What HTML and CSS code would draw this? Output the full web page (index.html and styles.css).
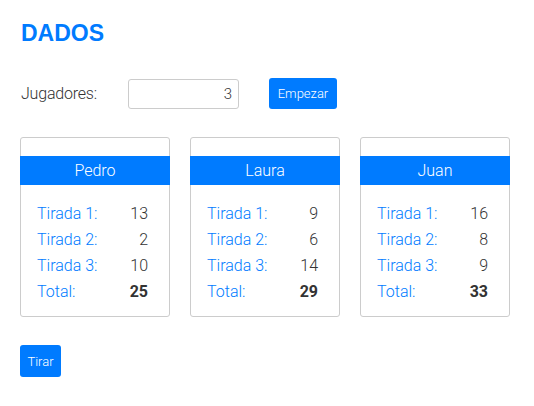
FILE: index.html
```html
<!DOCTYPE html>
<html lang="es">
<head>
<meta charset="utf-8">
<title>Dados</title>
<link rel="stylesheet" href="styles.css">
</head>
<body>
<div class="app">
  <h1 class="title">DADOS</h1>
  <div class="controls">
    <label class="controls-label" for="players">Jugadores:</label>
    <input class="controls-input" id="players" type="text" value="3">
    <button class="btn btn-start">Empezar</button>
  </div>
  <div class="cards">
    <div class="card">
      <div class="card-head">Pedro</div>
      <div class="rows">
        <span class="lbl">Tirada 1:</span><span class="val">13</span>
        <span class="lbl">Tirada 2:</span><span class="val">2</span>
        <span class="lbl">Tirada 3:</span><span class="val">10</span>
        <span class="lbl">Total:</span><span class="val total">25</span>
      </div>
    </div>
    <div class="card">
      <div class="card-head">Laura</div>
      <div class="rows">
        <span class="lbl">Tirada 1:</span><span class="val">9</span>
        <span class="lbl">Tirada 2:</span><span class="val">6</span>
        <span class="lbl">Tirada 3:</span><span class="val">14</span>
        <span class="lbl">Total:</span><span class="val total">29</span>
      </div>
    </div>
    <div class="card">
      <div class="card-head">Juan</div>
      <div class="rows">
        <span class="lbl">Tirada 1:</span><span class="val">16</span>
        <span class="lbl">Tirada 2:</span><span class="val">8</span>
        <span class="lbl">Tirada 3:</span><span class="val">9</span>
        <span class="lbl">Total:</span><span class="val total">33</span>
      </div>
    </div>
  </div>
  <button class="btn btn-roll">Tirar</button>
</div>
</body>
</html>
```
FILE: styles.css
```css
html, body {
  margin: 0;
  padding: 0;
  background: #fff;
}
body {
  font-family: Roboto, "Liberation Sans", sans-serif;
  font-weight: 300;
  color: #333;
}
.app {
  padding: 20px 20px 0 20px;
}
.title {
  margin: 0 0 0 1px;
  font-family: "Liberation Sans", Arial, sans-serif;
  font-weight: 700;
  font-size: 23px;
  line-height: 26px;
  color: #007bff;
}
.controls {
  display: flex;
  align-items: center;
  margin-top: 32px;
}
.controls-label {
  width: 107px;
  padding-left: 1px;
  font-size: 16px;
  letter-spacing: -0.2px;
  color: #333;
}
.controls-input {
  box-sizing: border-box;
  width: 111px;
  height: 30px;
  border: 1px solid #ccc;
  border-radius: 3px;
  padding: 0 6px;
  text-align: right;
  font-family: Roboto, "Liberation Sans", sans-serif;
  font-weight: 300;
  font-size: 15px;
  color: #333;
  outline: none;
}
.btn {
  border: none;
  border-radius: 3px;
  background: #007bff;
  color: #fff;
  font-family: Roboto, "Liberation Sans", sans-serif;
  font-weight: 300;
  font-size: 13px;
  padding: 0;
}
.btn-start {
  margin-left: 30px;
  width: 68px;
  height: 31px;
}
.cards {
  display: flex;
  gap: 20px;
  margin-top: 28px;
}
.card {
  box-sizing: border-box;
  width: 150px;
  height: 180px;
  border: 1px solid #ccc;
  border-radius: 3px;
  padding-top: 18px;
}
.card-head {
  margin: 0 -1px;
  height: 29px;
  line-height: 29px;
  background: #007bff;
  color: #fff;
  text-align: center;
  font-size: 16px;
}
.rows {
  display: grid;
  grid-template-columns: 1fr auto;
  grid-auto-rows: 26px;
  align-items: center;
  padding: 15px 21px 0 16px;
  font-size: 16px;
}
.lbl {
  color: #007bff;
}
.val {
  text-align: right;
  color: #333;
}
.total {
  font-weight: 700;
}
.btn-roll {
  display: block;
  margin-top: 28px;
  width: 41px;
  height: 32px;
}
```
